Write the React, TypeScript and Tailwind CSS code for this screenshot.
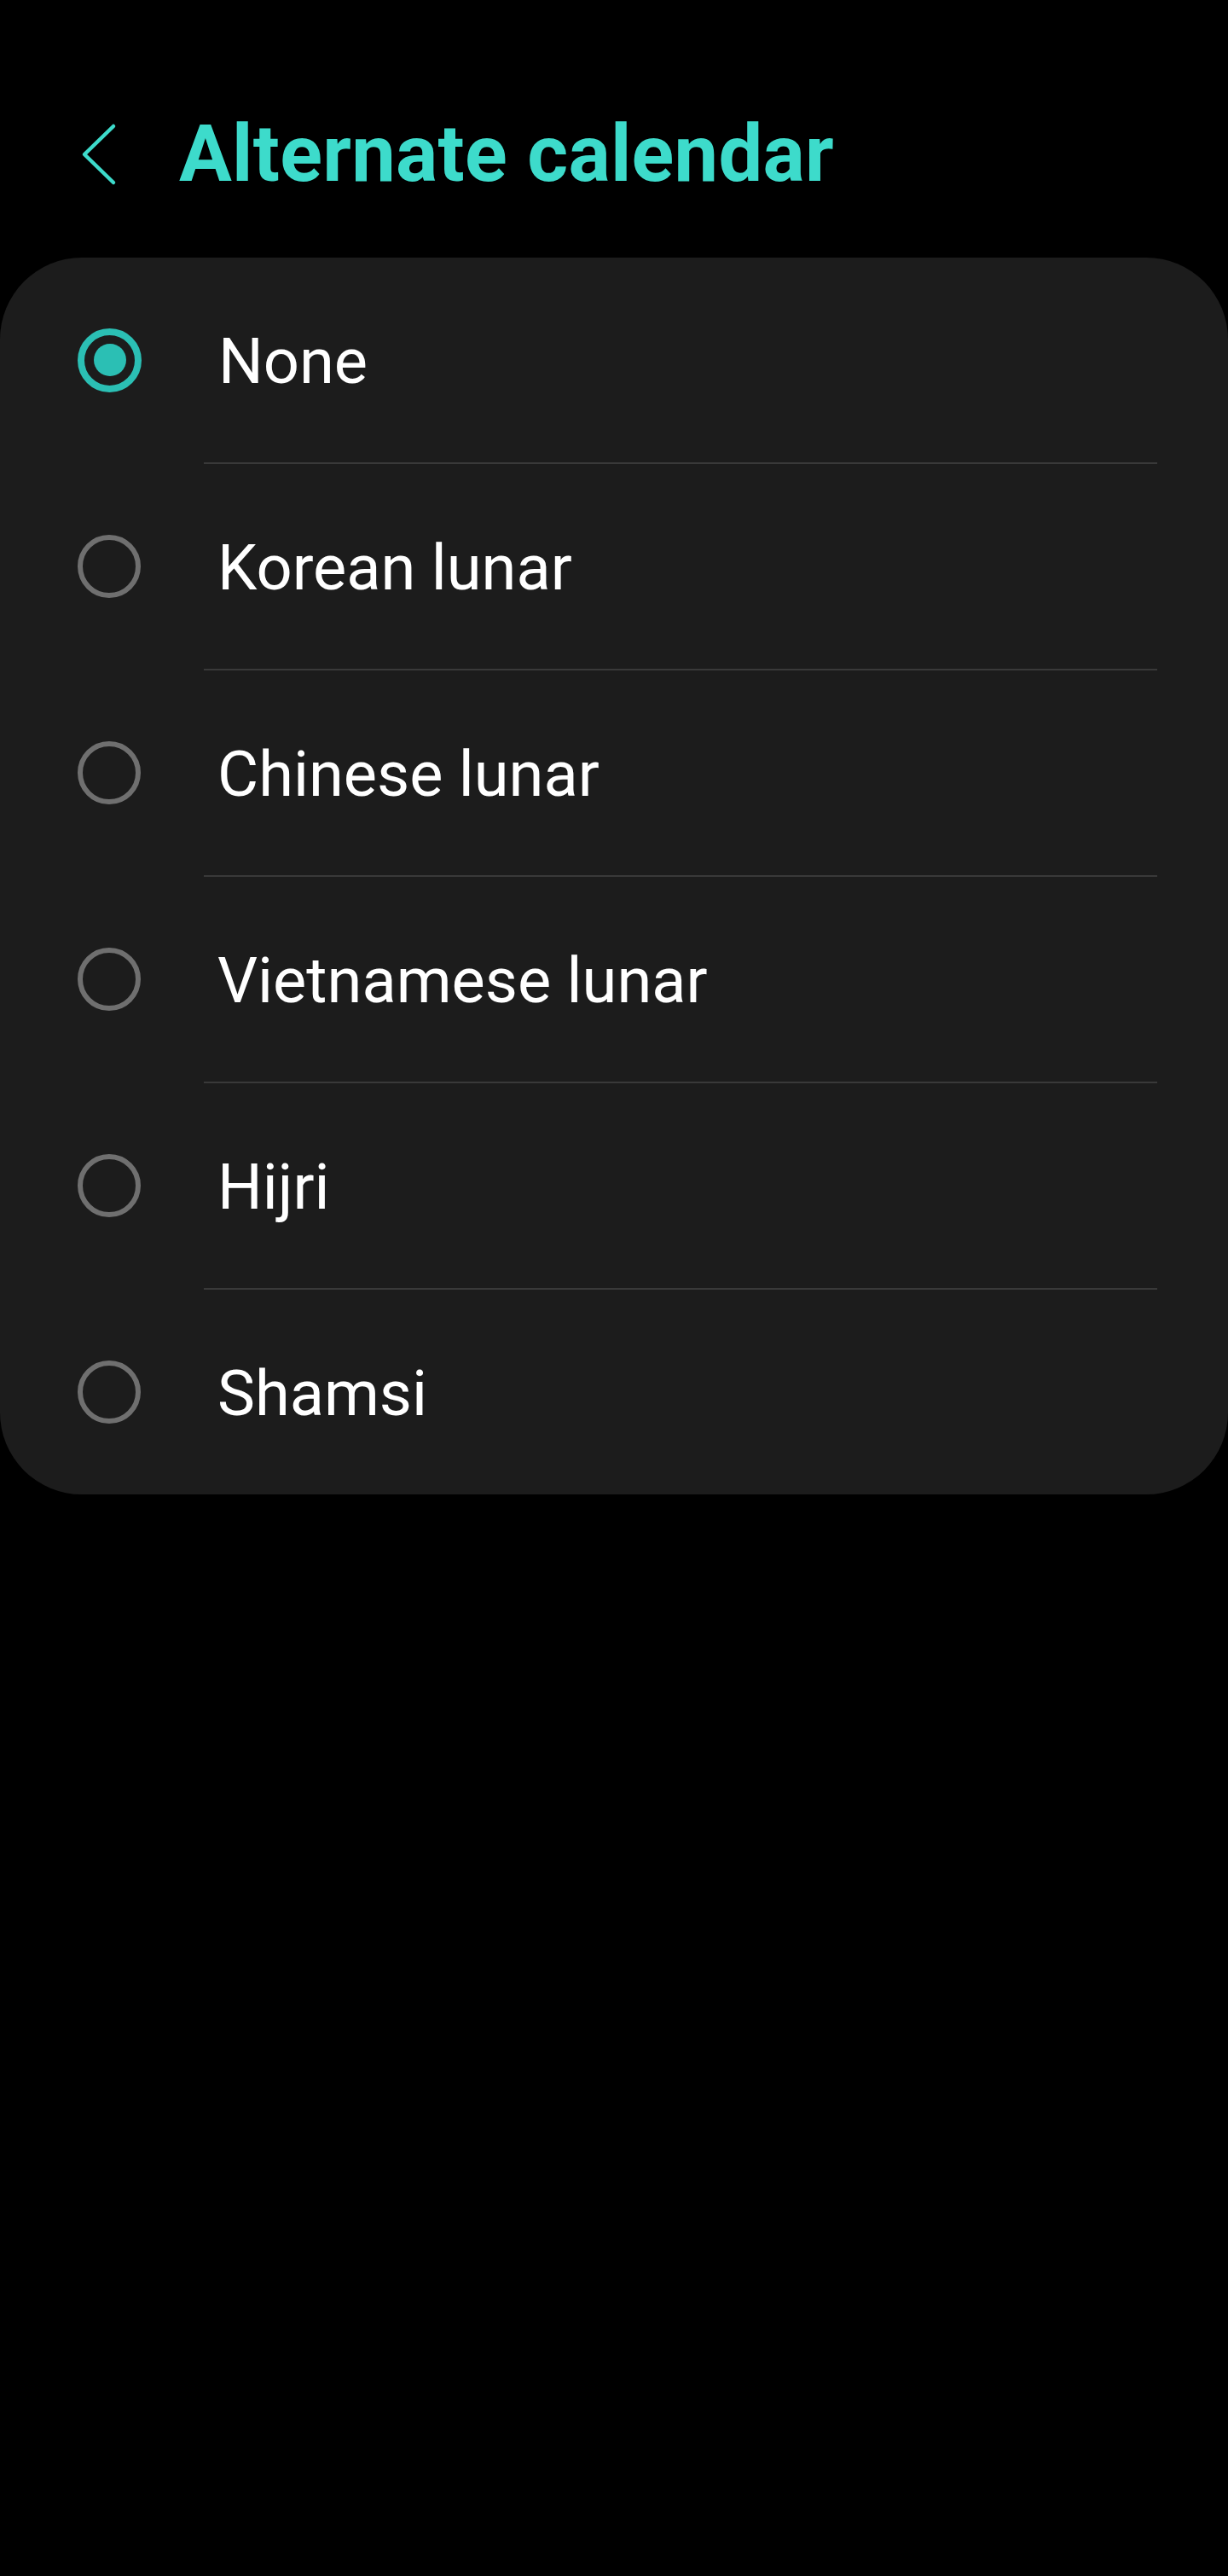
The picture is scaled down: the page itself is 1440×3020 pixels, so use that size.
import React, { useState } from 'react';

const options = ['None', 'Korean lunar', 'Chinese lunar', 'Vietnamese lunar', 'Hijri', 'Shamsi'];

export default function App() {
  const [selected, setSelected] = useState('None');

  return (
    <div className="min-h-[3020px] w-[1440px] bg-black font-['Roboto',sans-serif]">
      <header className="flex h-[302px] items-center pt-[60px]">
        <button className="ml-[92px] flex h-[80px] w-[48px] items-center justify-center">
          <svg width="48" height="80" viewBox="0 0 48 80" fill="none">
            <path d="M41 7 L7 40 L41 73" stroke="#3ddbcb" strokeWidth="4.5" strokeLinecap="round" strokeLinejoin="round" />
          </svg>
        </button>
        <h1 className="ml-[70px] text-[92px] font-bold leading-none tracking-[0.3px] text-[#3ddbcb]">
          Alternate calendar
        </h1>
      </header>

      <div className="rounded-[96px] bg-[#1c1c1c]">
        {options.map((opt, i) => {
          const active = opt === selected;
          return (
            <div key={opt}>
              <div
                className="flex h-[240px] cursor-pointer items-center pl-[91px]"
                onClick={() => setSelected(opt)}
              >
                {active ? (
                  <span className="flex h-[75px] w-[75px] items-center justify-center rounded-full border-[8.5px] border-[#2bbfb4]">
                    <span className="h-[38px] w-[38px] rounded-full bg-[#2bbfb4]" />
                  </span>
                ) : (
                  <span className="h-[74px] w-[74px] rounded-full border-[6px] border-[#6f6f6f]" />
                )}
                <span className="ml-[90px] pt-[3px] text-[74px] leading-none text-white">{opt}</span>
              </div>
              {i < options.length - 1 && <div className="ml-[239px] mr-[83px] h-[2px] bg-[#393939]" />}
            </div>
          );
        })}
      </div>
    </div>
  );
}
